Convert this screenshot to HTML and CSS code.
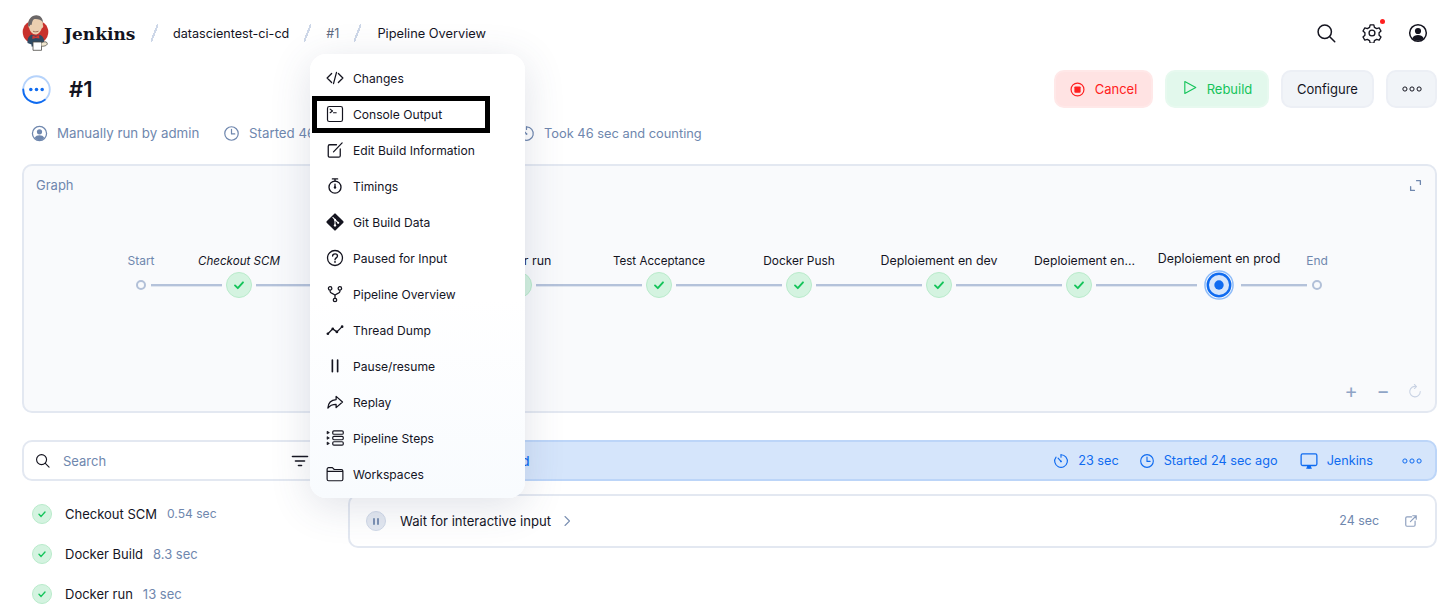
FILE: index.html
```html
<!DOCTYPE html>
<html lang="en">
<head>
<meta charset="utf-8">
<title>Pipeline Overview</title>
<link rel="stylesheet" href="styles.css">
</head>
<body>
<svg class="sprite" aria-hidden="true">
  <symbol id="i-clock" viewBox="0 0 24 24"><circle cx="12" cy="12" r="9.5" fill="none" stroke="currentColor" stroke-width="1.7"/><path d="M12 6v6.6h4.6" fill="none" stroke="currentColor" stroke-width="1.7" stroke-linecap="round" stroke-linejoin="round"/></symbol>
  <symbol id="i-timer" viewBox="0 0 24 24"><path d="M12 2.6a9.5 9.500 0 1 1-7.400 3.600" fill="none" stroke="currentColor" stroke-width="1.700" stroke-linecap="round"/><path d="M12 2.600v3.600M7.600 7.600l4.400 5" fill="none" stroke="currentColor" stroke-width="1.700" stroke-linecap="round"/><circle cx="12" cy="12.600" r="1.300" fill="currentColor"/></symbol>
  <symbol id="i-stopwatch" viewBox="0 0 24 24"><circle cx="12" cy="13.500" r="8" fill="none" stroke="currentColor" stroke-width="1.800"/><path d="M8.500 2.500h7M12 2.500v3M12 9.500v4" fill="none" stroke="currentColor" stroke-width="1.800" stroke-linecap="round"/><circle cx="12" cy="14" r="1.600" fill="currentColor"/></symbol>
  <symbol id="i-user" viewBox="0 0 24 24"><circle cx="12" cy="12" r="10" fill="none" stroke="currentColor" stroke-width="1.800"/><circle cx="12" cy="9.600" r="3.700" fill="currentColor"/><path d="M5.200 18.200c1.200-2.600 3.900-3.700 6.800-3.700s5.600 1.100 6.800 3.700A9.600 9.600 0 0 1 12 21.400a9.600 9.600 0 0 1-6.800-3.200z" fill="currentColor"/></symbol>
  <symbol id="i-check" viewBox="0 0 24 24"><path d="M6 12.600l4.200 4.200L18 8" fill="none" stroke="currentColor" stroke-width="2.800" stroke-linecap="round" stroke-linejoin="round"/></symbol>
  <symbol id="i-code" viewBox="0 0 24 24"><path d="M7.500 6L1.500 12l6 6M16.500 6l6 6-6 6M14 4.500L10 19.500" fill="none" stroke="currentColor" stroke-width="1.700" stroke-linecap="round" stroke-linejoin="round"/></symbol>
  <symbol id="i-term" viewBox="0 0 24 24"><rect x="2" y="2" width="20" height="20" rx="2.500" fill="none" stroke="currentColor" stroke-width="1.600"/><path d="M5.500 5.500l3.200 2.400-3.200 2.400M10 10.300h3.600" fill="none" stroke="currentColor" stroke-width="1.500" stroke-linecap="round" stroke-linejoin="round"/></symbol>
  <symbol id="i-edit" viewBox="0 0 24 24"><path d="M14 5H5a2 2 0 0 0-2 2v13a1.500 1.500 0 0 0 1.500 1.500H17a2 2 0 0 0 2-2v-9" fill="none" stroke="currentColor" stroke-width="1.700" stroke-linecap="round"/><path d="M10 14.500L21.500 2.500" fill="none" stroke="currentColor" stroke-width="1.700" stroke-linecap="round"/></symbol>
  <symbol id="i-git" viewBox="0 0 24 24"><path d="M12.900.9l10.200 10.200a1.300 1.300 0 0 1 0 1.800L12.900 23.100a1.300 1.300 0 0 1-1.800 0L.9 12.900a1.300 1.300 0 0 1 0-1.800L11.100.9a1.300 1.300 0 0 1 1.800 0z" fill="currentColor"/><path d="M8.800 5.600l3.200 3.200M12 8.800v7.200M12 8.800l4 4" fill="none" stroke="#fff" stroke-width="1.400"/><circle cx="12" cy="9" r="1.500" fill="#fff"/><circle cx="12" cy="16.500" r="1.600" fill="#fff"/><circle cx="16.200" cy="13" r="1.500" fill="#fff"/></symbol>
  <symbol id="i-help" viewBox="0 0 24 24"><circle cx="12" cy="12" r="10" fill="none" stroke="currentColor" stroke-width="1.700"/><path d="M8.800 9.400c0-1.900 1.400-3 3.300-3 1.800 0 3.200 1.100 3.200 2.800 0 2.600-3.300 2.700-3.300 5.100" fill="none" stroke="currentColor" stroke-width="1.800" stroke-linecap="round"/><circle cx="12" cy="17.300" r="1.200" fill="currentColor"/></symbol>
  <symbol id="i-branch" viewBox="0 0 24 24"><circle cx="5.500" cy="4.500" r="2.300" fill="none" stroke="currentColor" stroke-width="1.700"/><circle cx="18.500" cy="4.500" r="2.300" fill="none" stroke="currentColor" stroke-width="1.700"/><circle cx="12" cy="20" r="2.300" fill="none" stroke="currentColor" stroke-width="1.700"/><path d="M5.500 7v2c0 2.500 6.500 2.500 6.500 5v3.500M18.500 7v2c0 2.500-6.500 2.500-6.500 5" fill="none" stroke="currentColor" stroke-width="1.700"/></symbol>
  <symbol id="i-thread" viewBox="0 0 24 24"><path d="M2.500 17l6.500-6.500 5.500 4L21.500 7.500" fill="none" stroke="currentColor" stroke-width="1.700"/><circle cx="2.500" cy="17" r="1.800" fill="currentColor"/><circle cx="9" cy="10.500" r="1.800" fill="currentColor"/><circle cx="14.500" cy="14.500" r="1.800" fill="currentColor"/><circle cx="21.500" cy="7.500" r="1.800" fill="currentColor"/></symbol>
  <symbol id="i-pause" viewBox="0 0 24 24"><path d="M8.500 4v15.500M15.500 4v15.500" fill="none" stroke="currentColor" stroke-width="2.200" stroke-linecap="round"/></symbol>
  <symbol id="i-pause-sm" viewBox="0 0 24 24"><path d="M6 2v20M18 2v20" fill="none" stroke="currentColor" stroke-width="6"/></symbol>
  <symbol id="i-share" viewBox="0 0 24 24"><path d="M13.500 4.500L22 12l-8.500 7.500v-4.300c-5.500 0-8.500 1.600-11 4.800.4-6.100 4-10.800 11-11.200z" fill="none" stroke="currentColor" stroke-width="1.700" stroke-linejoin="round"/></symbol>
  <symbol id="i-steps" viewBox="0 0 24 24"><rect x="9" y="2.500" width="14" height="4.500" rx="1.500" fill="none" stroke="currentColor" stroke-width="1.600"/><rect x="9" y="9.800" width="14" height="4.500" rx="1.500" fill="none" stroke="currentColor" stroke-width="1.600"/><rect x="9" y="17" width="14" height="4.500" rx="1.500" fill="none" stroke="currentColor" stroke-width="1.600"/><path d="M1.500 3l3 1.800-3 1.800zM1.500 10.200l3 1.800-3 1.800zM1.500 17.400l3 1.800-3 1.800z" fill="currentColor" stroke="currentColor"/></symbol>
  <symbol id="i-folder" viewBox="0 0 24 24"><path d="M1.500 19V5.500A2 2 0 0 1 3.500 3.500h5l2.500 2.500h9.500a2 2 0 0 1 2 2V19a2 2 0 0 1-2 2h-17a2 2 0 0 1-2-2zM1.500 8.500h21" fill="none" stroke="currentColor" stroke-width="1.600" stroke-linejoin="round"/></symbol>
  <symbol id="i-search" viewBox="0 0 24 24"><circle cx="10.500" cy="10.500" r="8" fill="none" stroke="currentColor" stroke-width="1.800"/><path d="M16.500 16.500l6 6" fill="none" stroke="currentColor" stroke-width="1.800" stroke-linecap="round"/></symbol>
  <symbol id="i-gear" viewBox="0 0 24 24"><path d="M9.800 2.200h4.400l.7 3 2.700 1.500 3-.9 2.200 3.800-2.300 2.100v3l2.300 2.100-2.200 3.800-3-.9-2.700 1.500-.7 3H9.800l-.7-3-2.700-1.500-3 .9-2.200-3.800 2.300-2.100v-3L1.200 9.600l2.200-3.800 3 .9 2.700-1.500z" fill="none" stroke="currentColor" stroke-width="1.600" stroke-linejoin="round"/><circle cx="12" cy="12" r="3.500" fill="none" stroke="currentColor" stroke-width="1.600"/></symbol>
  <symbol id="i-dots" viewBox="0 0 24 24"><circle cx="3.500" cy="12" r="2.500" fill="none" stroke="currentColor" stroke-width="1.200"/><circle cx="12" cy="12" r="2.500" fill="none" stroke="currentColor" stroke-width="1.200"/><circle cx="20.500" cy="12" r="2.500" fill="none" stroke="currentColor" stroke-width="1.200"/></symbol>
  <symbol id="i-filter" viewBox="0 0 24 24"><path d="M2 6h20M6 12h12M10 18h4" fill="none" stroke="currentColor" stroke-width="2.200" stroke-linecap="round"/></symbol>
  <symbol id="i-expand" viewBox="0 0 24 24"><path d="M14 3h7v7M10 21H3v-7" fill="none" stroke="currentColor" stroke-width="2.400" stroke-linecap="round" stroke-linejoin="round"/></symbol>
  <symbol id="i-monitor" viewBox="0 0 24 24"><rect x="1.500" y="2.500" width="21" height="15.500" rx="2" fill="none" stroke="currentColor" stroke-width="1.700"/><path d="M8 21.500h8M10 18.500h4v3h-4z" fill="currentColor" stroke="currentColor" stroke-width="1.200"/></symbol>
  <symbol id="i-external" viewBox="0 0 24 24"><path d="M13 5H5a2 2 0 0 0-2 2v12a2 2 0 0 0 2 2h12a2 2 0 0 0 2-2v-7" fill="none" stroke="currentColor" stroke-width="2" stroke-linecap="round"/><path d="M11 13l10-10M15 3h6v6" fill="none" stroke="currentColor" stroke-width="2" stroke-linecap="round" stroke-linejoin="round"/></symbol>
  <symbol id="i-reload" viewBox="0 0 24 24"><path d="M14 4.300A9 9 0 1 0 21 13" fill="none" stroke="currentColor" stroke-width="1.800" stroke-linecap="round"/><path d="M11 .8l3.500 3.500L11 7.800" fill="none" stroke="currentColor" stroke-width="1.800" stroke-linecap="round" stroke-linejoin="round"/></symbol>
  <symbol id="i-chevron" viewBox="0 0 24 24"><path d="M8 3l9 9-9 9" fill="none" stroke="currentColor" stroke-width="2.200" stroke-linecap="round" stroke-linejoin="round"/></symbol>
  <symbol id="i-stop" viewBox="0 0 24 24"><circle cx="12" cy="12" r="10.300" fill="none" stroke="currentColor" stroke-width="1.900"/><rect x="7" y="7" width="10" height="10" rx="1.500" fill="currentColor"/></symbol>
  <symbol id="i-play" viewBox="0 0 24 24"><path d="M4.500 2.500L22 12 4.500 21.500z" fill="none" stroke="currentColor" stroke-width="1.800" stroke-linejoin="round"/></symbol>
</svg>

<header class="topbar">
  <div class="crumbs">
    <svg class="logo" viewBox="0 0 27 36" aria-hidden="true">
      <ellipse cx="13.500" cy="17" rx="12.800" ry="12" fill="#c8312c"/>
      <path d="M5.500 28c-.5-4 1-7 4-8.500 3 1.500 6 1.500 9 .5 2.500 1.500 4 4 3.500 7.500l-3.500 2v2H9.500v-2z" fill="#2f4a63"/>
      <path d="M6.500 9.500C6 4.500 9.500.8 14 .8c4.500 0 7.500 3.700 6.800 9.200.9.900.5 3-1 3.200-1.200 3.500-3.500 6.300-6.300 6.300-3 0-5.600-3-6.300-6.500-.9-.9-1-2.700-.7-3.500z" fill="#eccfb0"/>
      <path d="M6.400 11.500C5 5 9.500.2 14.500.2c3.500 0 6.500 2.800 6.400 7-2-2.500-5.500-3.500-9-3-1.500 1-2 3.500-2.200 5.800-.6-.6-1.900-.2-1.900.9l-.5.6z" fill="#6b6768"/>
      <path d="M11 16.200c1.500.8 3.500.8 5.500 0" fill="none" stroke="#8a5a44" stroke-width=".8"/>
      <path d="M10.500 20.500l3.300 1.300 3.300-1.500.4 3.200-3.700-.6-3.500 1z" fill="#d33833"/>
      <path d="M11 27h8.500v8.300H11z" fill="#fff" stroke="#4b4a45" stroke-width=".8"/>
      <path d="M19.500 27.500c2.500-.9 5.200-1.200 5.700.7.500 2.100-2.700 3.300-5.700 3" fill="#f1e7cf" stroke="#4b4a45" stroke-width=".8"/>
    </svg>
    <span class="brand">Jenkins</span>
    <span class="slash"></span>
    <span class="crumb">datascientest-ci-cd</span>
    <span class="slash"></span>
    <span class="crumb crumb-id">#1</span>
    <span class="slash"></span>
    <span class="crumb crumb-page">Pipeline Overview</span>
  </div>
  <div class="top-actions">
    <svg class="top-icon"><use href="#i-search"/></svg>
    <span class="gear-wrap"><svg class="top-icon"><use href="#i-gear"/></svg><span class="notify"></span></span>
    <svg class="top-icon"><use href="#i-user"/></svg>
  </div>
</header>

<main class="page">
  <section class="title-row">
    <div class="title">
      <svg class="run-icon" viewBox="0 0 28 28" aria-hidden="true">
        <circle cx="14" cy="14" r="12.800" fill="none" stroke="#b6d3fb" stroke-width="1.800"/>
        <path d="M1.200 14A12.800 12.800 0 0 0 22 24" fill="none" stroke="#0f6bf0" stroke-width="1.800" stroke-linecap="round"/>
        <circle cx="8.500" cy="14" r="1.700" fill="#0f6bf0"/><circle cx="14" cy="14" r="1.700" fill="#0f6bf0"/><circle cx="19.500" cy="14" r="1.700" fill="#0f6bf0"/>
      </svg>
      <h1>#1</h1>
    </div>
    <div class="actions">
      <button class="btn btn-cancel"><svg class="btn-icon"><use href="#i-stop"/></svg>Cancel</button>
      <button class="btn btn-rebuild"><svg class="btn-icon"><use href="#i-play"/></svg>Rebuild</button>
      <button class="btn btn-plain">Configure</button>
      <button class="btn btn-more" aria-label="More"><svg class="more-icon"><use href="#i-dots"/></svg></button>
    </div>
  </section>

  <section class="meta">
    <span class="meta-item meta-user"><svg class="meta-icon"><use href="#i-user"/></svg>Manually run by admin</span>
    <span class="meta-item meta-started"><svg class="meta-icon"><use href="#i-clock"/></svg>Started 46 sec ago</span>
    <span class="meta-item meta-took"><svg class="meta-icon"><use href="#i-timer"/></svg>Took 46 sec and counting</span>
  </section>

  <section class="graph">
    <div class="graph-head">
      <span>Graph</span>
      <svg class="graph-expand"><use href="#i-expand"/></svg>
    </div>
    <div class="stages">
      <div class="stage stage-end stage-first">
        <span class="stage-label muted">Start</span>
        <div class="node-row"><i class="edge edge-none"></i><span class="dot"></span><i class="edge"></i></div>
      </div>
      <div class="stage">
        <span class="stage-label italic">Checkout SCM</span>
        <div class="node-row"><i class="edge"></i><span class="ok ok-lg"><svg><use href="#i-check"/></svg></span><i class="edge"></i></div>
      </div>
      <div class="stage">
        <span class="stage-label"></span>
        <div class="node-row"><i class="edge"></i><span class="ok ok-lg"><svg><use href="#i-check"/></svg></span><i class="edge"></i></div>
      </div>
      <div class="stage">
        <span class="stage-label">Docker run</span>
        <div class="node-row"><i class="edge"></i><span class="ok ok-lg"><svg><use href="#i-check"/></svg></span><i class="edge"></i></div>
      </div>
      <div class="stage">
        <span class="stage-label label-tight">Test Acceptance</span>
        <div class="node-row"><i class="edge"></i><span class="ok ok-lg"><svg><use href="#i-check"/></svg></span><i class="edge"></i></div>
      </div>
      <div class="stage">
        <span class="stage-label label-mid">Docker Push</span>
        <div class="node-row"><i class="edge"></i><span class="ok ok-lg"><svg><use href="#i-check"/></svg></span><i class="edge"></i></div>
      </div>
      <div class="stage">
        <span class="stage-label">Deploiement en dev</span>
        <div class="node-row"><i class="edge"></i><span class="ok ok-lg"><svg><use href="#i-check"/></svg></span><i class="edge"></i></div>
      </div>
      <div class="stage">
        <span class="stage-label label-trunc">Deploiement en…</span>
        <div class="node-row"><i class="edge"></i><span class="ok ok-lg"><svg><use href="#i-check"/></svg></span><i class="edge"></i></div>
      </div>
      <div class="stage stage-live">
        <span class="stage-label">Deploiement en prod</span>
        <div class="node-row">
          <i class="edge"></i>
          <svg class="live" viewBox="0 0 32 32" aria-hidden="true">
            <circle cx="16" cy="16" r="15" fill="none" stroke="#8ebcf9" stroke-width="1.600"/>
            <circle cx="16" cy="16" r="12" fill="#d5e5fb" stroke="#0f6bf0" stroke-width="2.600"/>
            <circle cx="16" cy="16" r="5" fill="#0f6bf0"/>
          </svg>
          <i class="edge"></i>
        </div>
      </div>
      <div class="stage stage-end">
        <span class="stage-label muted">End</span>
        <div class="node-row"><i class="edge"></i><span class="dot"></span><i class="edge edge-none"></i></div>
      </div>
    </div>
    <div class="zoom-tools">
      <span class="zoom-plus">+</span>
      <span class="zoom-minus">−</span>
      <svg class="zoom-reload"><use href="#i-reload"/></svg>
    </div>
  </section>

  <section class="lower">
    <aside class="side">
      <div class="search">
        <svg class="search-icon"><use href="#i-search"/></svg>
        <span class="search-text">Search</span>
        <svg class="filter-icon"><use href="#i-filter"/></svg>
      </div>
      <ul class="stage-list">
        <li><span class="ok ok-sm"><svg><use href="#i-check"/></svg></span><span>Checkout SCM</span><span class="muted time-tight">0.54 sec</span></li>
        <li><span class="ok ok-sm"><svg><use href="#i-check"/></svg></span><span>Docker Build</span><span class="muted">8.3 sec</span></li>
        <li><span class="ok ok-sm"><svg><use href="#i-check"/></svg></span><span>Docker run</span><span class="muted">13 sec</span></li>
      </ul>
    </aside>
    <div class="detail">
      <div class="detail-bar">
        <span class="detail-title">Deploiement en prod</span>
        <div class="detail-facts">
          <span class="fact"><svg class="fact-icon"><use href="#i-timer"/></svg>23 sec</span>
          <span class="fact"><svg class="fact-icon"><use href="#i-clock"/></svg>Started 24 sec ago</span>
          <span class="fact fact-host"><svg class="fact-icon fact-monitor"><use href="#i-monitor"/></svg>Jenkins</span>
          <svg class="more-icon fact-more"><use href="#i-dots"/></svg>
        </div>
      </div>
      <div class="step-row">
        <span class="paused"><svg><use href="#i-pause-sm"/></svg></span>
        <span class="step-name">Wait for interactive input</span>
        <svg class="chevron"><use href="#i-chevron"/></svg>
        <span class="step-time">24 sec</span>
        <svg class="external"><use href="#i-external"/></svg>
      </div>
    </div>
  </section>
</main>

<nav class="menu">
  <a class="menu-item"><svg><use href="#i-code"/></svg>Changes</a>
  <a class="menu-item"><svg><use href="#i-term"/></svg>Console Output</a>
  <a class="menu-item"><svg><use href="#i-edit"/></svg>Edit Build Information</a>
  <a class="menu-item"><svg><use href="#i-stopwatch"/></svg>Timings</a>
  <a class="menu-item"><svg><use href="#i-git"/></svg>Git Build Data</a>
  <a class="menu-item"><svg><use href="#i-help"/></svg>Paused for Input</a>
  <a class="menu-item"><svg><use href="#i-branch"/></svg>Pipeline Overview</a>
  <a class="menu-item"><svg><use href="#i-thread"/></svg>Thread Dump</a>
  <a class="menu-item"><svg><use href="#i-pause"/></svg>Pause/resume</a>
  <a class="menu-item"><svg><use href="#i-share"/></svg>Replay</a>
  <a class="menu-item"><svg><use href="#i-steps"/></svg>Pipeline Steps</a>
  <a class="menu-item"><svg><use href="#i-folder"/></svg>Workspaces</a>
</nav>
<div class="highlight"></div>
</body>
</html>
```

FILE: styles.css
```css
* { box-sizing: border-box; }
html, body { margin: 0; height: 605px; overflow: hidden; background: #fff; }
body { font-family: Inter, "Noto Sans", sans-serif; font-size: 13px; line-height: 18px; color: #14141f; position: relative; }
.sprite { display: none; }
svg { display: block; flex: none; }

.topbar { height: 66px; padding: 0 25px 0 22px; display: flex; align-items: center; justify-content: space-between; }
.crumbs { display: flex; align-items: center; }
.logo { width: 27px; height: 36px; margin-right: 15px; }
.brand { font-family: "DejaVu Serif", serif; font-weight: 700; font-size: 17px; width: 72px; white-space: nowrap; margin-top: 1px; }
.slash { width: 7px; height: 18px; margin: 0 15px; background: linear-gradient(to top left, transparent 42%, #cdd7e8 42%, #cdd7e8 58%, transparent 58%); }
.crumb { font-size: 12.6px; white-space: nowrap; padding-top: 2px; }
.crumb-id { color: #5f6b80; }
.crumb-page { font-size: 12.8px; margin-left: 1px; }
.top-actions { display: flex; align-items: center; gap: 26px; }
.top-icon { width: 20px; height: 20px; color: #14141f; }
.gear-wrap { position: relative; display: block; }
.notify { position: absolute; top: -4px; right: -3px; width: 5px; height: 5px; border-radius: 50%; background: #ff2020; }

.page { padding: 4px 16px 0 22px; }
.title-row { display: flex; justify-content: space-between; align-items: center; height: 38px; }
.title { display: flex; align-items: center; gap: 18px; }
.run-icon { width: 29px; height: 29px; }
h1 { margin: 0; font-size: 22px; line-height: 28px; font-weight: 600; }
.actions { display: flex; gap: 12px; }
.btn { height: 38px; border: 2px solid transparent; border-radius: 10px; display: flex; align-items: center; font: inherit; color: #14141f; padding: 0; justify-content: center; }
.btn-icon { width: 15px; height: 15px; margin-right: 10px; }
.btn-cancel { width: 99px; background: #ffe3e3; color: #ff2020; border-color: #ffe8e8; }
.btn-rebuild { width: 104px; background: #e2f8ec; color: #14c45a; border-color: #e7f9ef; }
.btn-rebuild .btn-icon { margin-top: -3px; }
.btn-plain { width: 93px; background: #f1f4f8; border-color: #eceff5; }
.btn-more { width: 51px; background: #f1f4f8; border-color: #eceff5; }
.more-icon { width: 20px; height: 20px; }

.meta { display: flex; height: 20px; margin-top: 15px; padding-left: 9px; color: #6f87ae; align-items: center; font-size: 13.3px; }
.meta-item { display: flex; align-items: center; gap: 9px; white-space: nowrap; }
.meta-icon { width: 17px; height: 17px; }
.meta-user { width: 192px; }
.meta-started { width: 295px; }
.meta-took { font-size: 12.85px; padding-top: 2px; }
.meta-took .meta-icon { margin-top: -2px; }

.graph { margin-top: 21px; height: 249px; border: 2px solid #e3e8f1; border-radius: 10px; background: #f9fafc; display: flex; flex-direction: column; }
.graph-head { display: flex; justify-content: space-between; align-items: center; padding: 10px 13px 0 12px; color: #6f87ae; }
.graph-expand { width: 13px; height: 13px; color: #6f87ae; }
.stages { display: flex; margin: 58px 0 0 89px; }
.stage { width: 140px; display: flex; flex-direction: column; align-items: center; }
.stage-end { width: 56px; }
.stage-label { height: 18px; white-space: nowrap; margin-bottom: 2px; font-size: 12.4px; }
.label-tight { font-size: 11.6px; }
.label-mid { font-size: 11.9px; }
.label-trunc { font-size: 12.2px; margin-left: 11px; }
.stage-label.italic { font-size: 11.6px; font-style: italic; }
.stage-end .stage-label { font-size: 12px; }
.stage-live .stage-label { margin-top: -2px; margin-bottom: 4px; }
.muted { color: #6f87ae; }
.node-row { width: 100%; height: 26px; display: flex; align-items: center; gap: 4px; }
.stage-end .node-row { gap: 5px; }
.stage-live .node-row { gap: 7px; }
.edge { flex: 1; height: 2px; background: #b4c2da; box-shadow: 0 1px 0 #dfe5ef; }
.edge-none { visibility: hidden; }
.dot { width: 10px; height: 10px; border-radius: 50%; border: 2px solid #b2c0d8; background: transparent; flex: none; }
.ok { flex: none; border-radius: 50%; background: #d4f3e0; border: 1px solid #b9ebcb; color: #14c45a; display: flex; align-items: center; justify-content: center; }
.ok-lg { width: 26px; height: 26px; }
.ok-lg svg { width: 16px; height: 16px; }
.ok-sm { width: 20px; height: 20px; }
.ok-sm svg { width: 12px; height: 12px; }
.live { width: 30px; height: 30px; margin: -2px 0; }
.zoom-tools { margin-top: auto; display: flex; align-items: center; justify-content: flex-end; gap: 18px; padding: 0 13px 12px 0; color: #a9b8d2; }
.zoom-plus { font-size: 20px; line-height: 16px; width: 14px; text-align: center; color: #8fa4c6; }
.zoom-minus { font-size: 20px; line-height: 16px; width: 14px; text-align: center; color: #8fa4c6; }
.zoom-reload { width: 14px; height: 14px; color: #c8d2e3; }

.lower { margin-top: 27px; display: grid; grid-template-columns: 308px 1fr; gap: 18px; }
.search { height: 41px; border: 2px solid #e3e8f1; border-radius: 10px; display: flex; align-items: center; padding: 0 19px 0 11px; color: #14141f; }
.search-icon { width: 15px; height: 15px; }
.search-text { color: #6f87ae; margin-left: 13px; flex: 1; }
.filter-icon { width: 18px; height: 18px; }
.stage-list { list-style: none; margin: 13px 0 0; padding: 0 0 0 10px; }
.stage-list li { height: 40px; display: flex; align-items: center; }
.stage-list li .ok { margin-right: 13px; }
.stage-list li .muted { margin-left: 10px; }
.stage-list li .time-tight { font-size: 12.1px; }
.detail-bar { height: 41px; border: 2px solid #bcd5f8; border-radius: 10px; background: #d5e5fb; color: #0f6bf0; display: flex; align-items: center; justify-content: space-between; padding: 0 13px 0 50px; }
.detail-title { font-weight: 500; }
.detail-facts { display: flex; align-items: center; gap: 20px; font-size: 12.7px; }
.fact { display: flex; align-items: center; gap: 9px; }
.fact-host { margin-left: 2px; }
.fact-icon { width: 16px; height: 16px; }
.fact-monitor { width: 18px; height: 18px; }
.fact-more { margin-left: 9px; }
.step-row { margin-top: 13px; height: 54px; border: 2px solid #e3e8f1; border-radius: 10px; display: flex; align-items: center; padding: 0 17px 0 16px; }
.paused { width: 20px; height: 20px; border-radius: 50%; background: #e3e8f1; border: 1px solid #d0d9e8; color: #7b90b3; display: flex; align-items: center; justify-content: center; }
.paused svg { width: 8px; height: 9px; }
.step-name { margin-left: 14px; font-size: 13.1px; }
.chevron { width: 12px; height: 12px; color: #7b90b3; margin-left: 10px; }
.step-time { margin-left: auto; color: #6f87ae; font-size: 12.4px; }
.external { width: 14px; height: 14px; color: #8ea0bf; margin-left: 25px; }

.menu { position: absolute; left: 310px; top: 54px; width: 215px; height: 444px; padding: 6px 0; border-radius: 16px; background: linear-gradient(#fff 55%, #f8fbfe); box-shadow: 0 8px 40px rgba(60,75,110,.16); font-size: 12.1px; }
.menu-item { height: 36px; display: flex; align-items: center; padding: 2px 0 0 16px; color: #14141f; gap: 9px; }
.menu-item svg { width: 18px; height: 18px; margin-top: -2px; }
.highlight { position: absolute; left: 312px; top: 96px; width: 178px; height: 37px; border: 5px solid #000; }
```
